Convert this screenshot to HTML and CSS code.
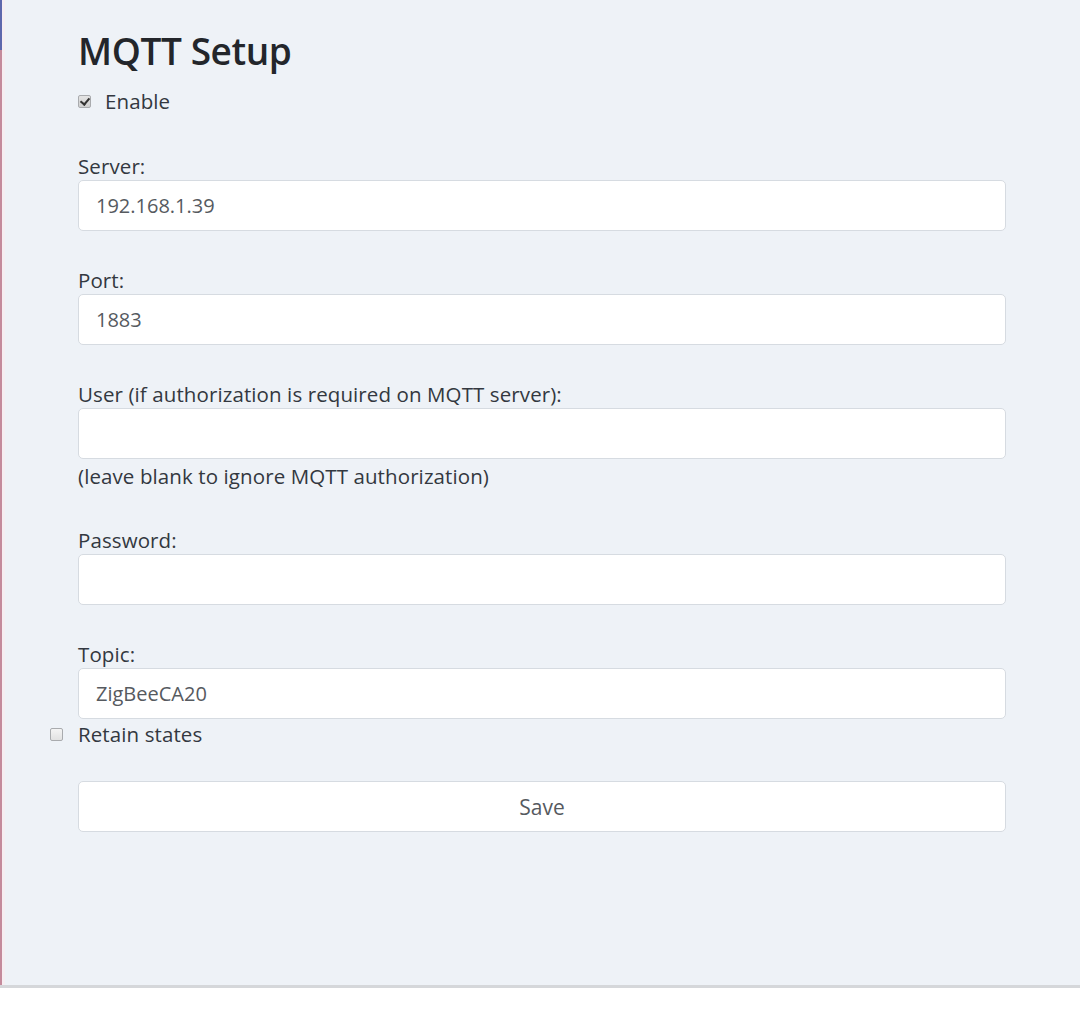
FILE: index.html
```html
<!DOCTYPE html>
<html lang="en">
<head>
<meta charset="utf-8">
<title>MQTT Setup</title>
<link rel="stylesheet" href="styles.css">
</head>
<body>
<div class="frame">
  <div class="edge"><div class="edge-top"></div></div>
  <main class="content">
    <h1 class="title">MQTT Setup</h1>
    <label class="check-row">
      <input type="checkbox" class="check" checked>
      <span>Enable</span>
    </label>
    <form class="form">
      <div class="group">
        <label class="label">Server:</label>
        <input class="field" type="text" value="192.168.1.39">
      </div>
      <div class="group">
        <label class="label">Port:</label>
        <input class="field" type="text" value="1883">
      </div>
      <div class="group group-help">
        <label class="label">User (if authorization is required on MQTT server):</label>
        <input class="field" type="text" value="">
        <div class="help">(leave blank to ignore MQTT authorization)</div>
      </div>
      <div class="group">
        <label class="label">Password:</label>
        <input class="field" type="password" value="">
      </div>
      <div class="group group-last">
        <label class="label">Topic:</label>
        <input class="field" type="text" value="ZigBeeCA20">
        <label class="retain-row">
          <input type="checkbox" class="check retain-check">
          <span>Retain states</span>
        </label>
      </div>
      <button type="button" class="save">Save</button>
    </form>
  </main>
</div>
</body>
</html>
```

FILE: styles.css
```css
html, body {
  margin: 0;
  padding: 0;
  background: #ffffff;
}

body {
  font-family: "Open Sans", "Noto Sans", sans-serif;
  color: #333840;
}

.frame {
  display: flex;
  height: 985px;
  background: #eef2f7;
  border-bottom: 3px solid #d5d7da;
}

.edge {
  width: 2px;
  flex: 0 0 2px;
  background: #c48b9c;
  border-right: 3px solid #f6eef2;
}

.edge-top {
  height: 50px;
  background: #5d68ad;
}

.content {
  padding-left: 73px;
  padding-top: 29px;
}

.title {
  margin: 0;
  font-size: 37px;
  font-weight: 600;
  line-height: 44px;
  color: #23262b;
  letter-spacing: -0.4px;
}

.check-row {
  display: flex;
  align-items: center;
  gap: 14px;
  margin-top: 15px;
  font-size: 20.5px;
  line-height: 27px;
  letter-spacing: 0.1px;
  color: #333840;
}

.check {
  appearance: none;
  -webkit-appearance: none;
  width: 13px;
  height: 13px;
  margin: 0;
  border: 1px solid #a9abae;
  border-radius: 2px;
  background: linear-gradient(#f2f2f2, #dcdcdc);
  position: relative;
  flex: 0 0 13px;
}

.check:checked {
  background: linear-gradient(#e4e4e4, #cfcfcf);
}

.check:checked::after {
  content: "";
  position: absolute;
  left: 3px;
  top: 0px;
  width: 4px;
  height: 7px;
  border: solid #333;
  border-width: 0 2px 2px 0;
  transform: rotate(40deg);
}

.form {
  width: 928px;
  margin-top: 38px;
  display: flex;
  flex-direction: column;
}

.group {
  display: flex;
  flex-direction: column;
  margin-bottom: 36px;
}

.group-help {
  margin-bottom: 37px;
}

.group-last {
  margin-bottom: 33px;
}

.label {
  font-size: 20.5px;
  line-height: 27px;
  letter-spacing: 0.1px;
  color: #333840;
}

.field {
  box-sizing: border-box;
  height: 51px;
  width: 100%;
  margin: 0;
  padding: 0 17px;
  border: 1px solid #d6dbe1;
  border-radius: 5px;
  background: #ffffff;
  font-family: "Open Sans", "Noto Sans", sans-serif;
  font-size: 20px;
  color: #565a5f;
  outline: none;
}

.help {
  margin-top: 4px;
  font-size: 20.5px;
  line-height: 27px;
  letter-spacing: 0.1px;
  color: #333840;
}

.retain-row {
  display: flex;
  align-items: center;
  gap: 15px;
  margin-left: -28px;
  margin-top: 2px;
  font-size: 20.5px;
  line-height: 27px;
  letter-spacing: 0.1px;
  color: #333840;
}

.retain-check {
  background: linear-gradient(#f4f4f4, #e2e2e2);
}

.save {
  box-sizing: border-box;
  height: 51px;
  width: 100%;
  margin: 0;
  border: 1px solid #d6dbe1;
  border-radius: 5px;
  background: #ffffff;
  font-family: "Open Sans", "Noto Sans", sans-serif;
  font-size: 21px;
  color: #565a5f;
}
```
